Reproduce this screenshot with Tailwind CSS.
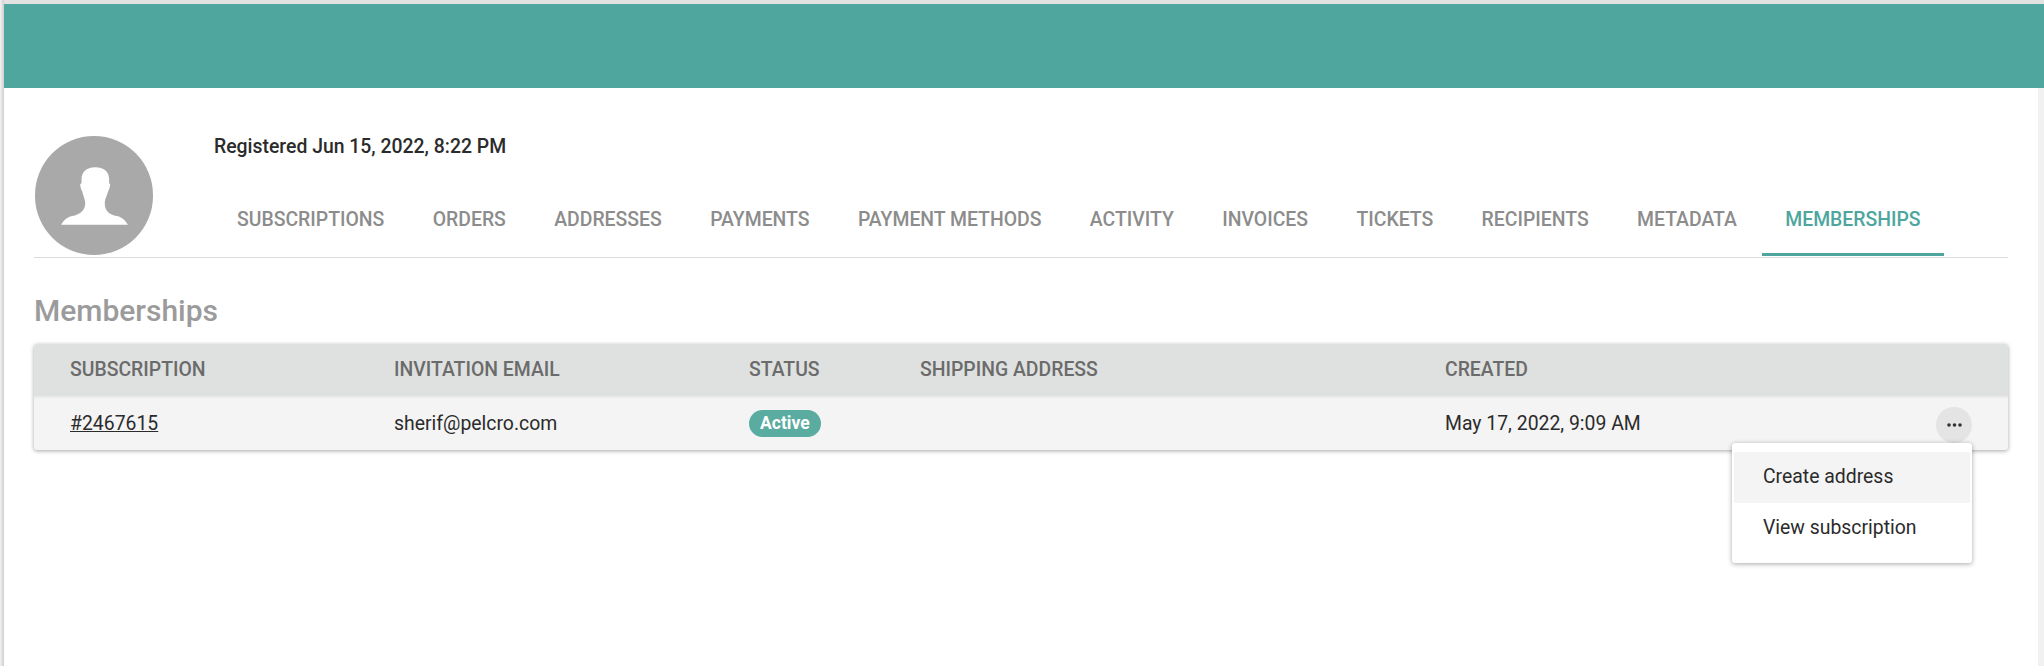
<!DOCTYPE html>
<html lang="en">
<head>
    <meta charset="UTF-8">
    <title>Memberships</title>
    <script src="https://cdn.jsdelivr.net/npm/@tailwindcss/browser@4"></script>
</head>
<body class="bg-white overflow-hidden font-['Roboto',sans-serif] antialiased">
    <div class="h-[666px] w-[2044px] bg-[linear-gradient(to_right,#f2f2f2,#cfcfcf_4px,#e2e2e2_4px)] pt-[4px] pl-[4px]">
        <!-- Top banner -->
        <div class="h-[84px] bg-[#4ea69e]"></div>

        <div class="h-[578px] border-r-[6px] border-[#f1f1f1] bg-white pr-[30px] pl-[30px]">
            <!-- Profile header -->
            <div class="flex h-[170px] border-b border-[#dddddd] pt-[48px]">
                <div class="ml-[1px] flex h-[119px] w-[118px] shrink-0 items-center justify-center rounded-full bg-[#a9a9a9]">
                    <svg class="h-[58px] w-[67px]" viewBox="30 52 202 173" fill="#ffffff">
                        <path d="M133 52C105 52 92 68 92 88L92 100L88 102C88 112 92 122 94 124C97 140 103 148 103 160C103 178 92 190 72 197C50 199 40 210 30 225L232 225C222 210 212 199 190 197C170 190 162 178 162 160C162 148 168 140 172 124C174 122 178 112 178 102L175 100L175 88C175 68 162 52 133 52Z"/>
                    </svg>
                </div>
                <div class="ml-[61px] flex min-w-0 flex-1 flex-col">
                    <p class="mt-[-1px] text-[19.4px] leading-[24px] font-medium text-[#2b2b2b]">Registered Jun 15, 2022, 8:22 PM</p>
                    <nav class="mt-auto mb-[1px] flex gap-[2.4px] text-[19.4px] font-medium text-[#8c8c8c]">
                        <a class="h-[64px] border-b-[3px] border-transparent px-[23px] pt-[16px] leading-[24px]">SUBSCRIPTIONS</a>
                        <a class="h-[64px] border-b-[3px] border-transparent px-[23px] pt-[16px] leading-[24px]">ORDERS</a>
                        <a class="h-[64px] border-b-[3px] border-transparent px-[23px] pt-[16px] leading-[24px]">ADDRESSES</a>
                        <a class="h-[64px] border-b-[3px] border-transparent px-[23px] pt-[16px] leading-[24px]">PAYMENTS</a>
                        <a class="h-[64px] border-b-[3px] border-transparent px-[23px] pt-[16px] leading-[24px]">PAYMENT METHODS</a>
                        <a class="h-[64px] border-b-[3px] border-transparent px-[23px] pt-[16px] leading-[24px]">ACTIVITY</a>
                        <a class="h-[64px] border-b-[3px] border-transparent px-[23px] pt-[16px] leading-[24px]">INVOICES</a>
                        <a class="h-[64px] border-b-[3px] border-transparent px-[23px] pt-[16px] leading-[24px]">TICKETS</a>
                        <a class="h-[64px] border-b-[3px] border-transparent px-[23px] pt-[16px] leading-[24px]">RECIPIENTS</a>
                        <a class="h-[64px] border-b-[3px] border-transparent px-[23px] pt-[16px] leading-[24px]">METADATA</a>
                        <a class="h-[64px] border-b-[3px] border-[#4ea69e] px-[23px] pt-[16px] leading-[24px] text-[#4ea69e]">MEMBERSHIPS</a>
                    </nav>
                </div>
            </div>

            <h2 class="mt-[35px] text-[30px] leading-[36px] font-medium text-[#9b9b9b]">Memberships</h2>

            <!-- Memberships table -->
            <div class="relative mt-[15px] rounded-[3px] bg-[#f4f4f4] shadow-[0_1px_4px_rgba(0,0,0,0.35)]">
                <div class="grid h-[52px] grid-cols-[324px_355px_171px_525px_1fr] items-center rounded-t-[3px] bg-[#dfe1e0] pb-[1px] pl-[36px] text-[19.4px] font-medium text-[#6b6b6b]">
                    <span>SUBSCRIPTION</span>
                    <span>INVITATION EMAIL</span>
                    <span>STATUS</span>
                    <span>SHIPPING ADDRESS</span>
                    <span>CREATED</span>
                </div>
                <div class="grid h-[54px] grid-cols-[324px_355px_171px_525px_1fr] items-center border-t-[2px] border-[#ebebeb] pb-[1px] pl-[36px] text-[19.4px] text-[#2b2b2b]">
                    <a class="underline">#2467615</a>
                    <span>sherif@pelcro.com</span>
                    <span class="flex"><span class="rounded-full bg-[#5aaba0] px-[11px] text-[17.5px] leading-[27px] font-bold text-white">Active</span></span>
                    <span></span>
                    <span>May 17, 2022, 9:09 AM</span>
                </div>

                <!-- Row actions button -->
                <div class="absolute top-[63px] right-[36px] flex h-[36px] w-[36px] items-center justify-center rounded-full bg-[#e4e4e4]">
                    <svg class="h-[4px] w-[15px]" viewBox="0 0 15 4" fill="#333333">
                        <circle cx="2" cy="2" r="1.8"/><circle cx="7.5" cy="2" r="1.8"/><circle cx="13" cy="2" r="1.8"/>
                    </svg>
                </div>

                <!-- Dropdown -->
                <div class="absolute top-[99px] right-[36px] h-[120px] w-[240px] rounded-[3px] bg-white px-[2px] pt-[9px] text-[19.4px] text-[#2b2b2b] shadow-[0_1px_5px_rgba(0,0,0,0.35)]">
                    <div class="h-[51px] bg-[#f4f4f4] pl-[29px] leading-[49px]">Create address</div>
                    <div class="h-[51px] pl-[29px] leading-[49px]">View subscription</div>
                </div>
            </div>
        </div>
    </div>
</body>
</html>
